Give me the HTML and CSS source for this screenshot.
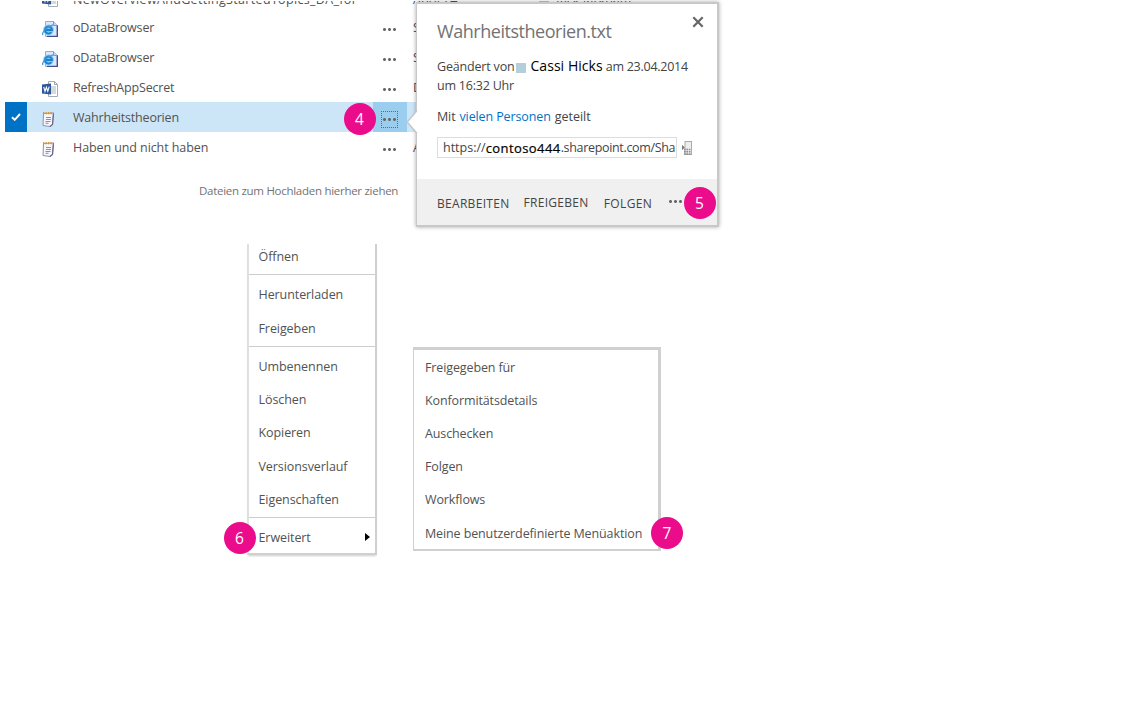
FILE: index.html
```html
<!DOCTYPE html>
<html lang="de">
<head>
<meta charset="utf-8">
<title>Dokumente</title>
<link rel="stylesheet" href="styles.css">
</head>
<body>
<svg class="sprite" aria-hidden="true">
  <symbol id="i-word" viewBox="0 0 16 16">
    <path d="M6.500 .5h6l3 3v12h-9z" fill="#fff" stroke="#a3abb5"/>
    <path d="M12.500 .5v3h3" fill="none" stroke="#97a0ab"/>
    <path d="M9 6h5M9 8h5M9 10h5M9 12h5" stroke="#a9b4c0"/>
    <path d="M0 3.500 9 2.500v11L0 12.500z" fill="#2b579a"/>
    <path d="M1.700 5.800 3 10.300 4.400 6.200 5.800 10.300 7.200 5.600" fill="none" stroke="#fff" stroke-width="1.100"/>
  </symbol>
  <symbol id="i-web" viewBox="0 0 16 16">
    <path d="M3.500 .5h8l4 4v11h-12z" fill="#dde7fa" stroke="#9aa9d0"/>
    <path d="M15.300 4v11.500H5" fill="none" stroke="#414f8c" stroke-width="1.400"/>
    <path d="M11.500 .5v4h4" fill="#c5d2f0" stroke="#8796c4"/>
    <circle cx="6.500" cy="8.800" r="5.300" fill="#7cc6f2"/>
    <path d="M3.200 9h6.800a3.500 3.500 0 1 0-.7 2.200" fill="none" stroke="#1f7fca" stroke-width="1.900"/>
    <path d="M1 14C-.8 11.500 5 5.500 11 3.800" fill="none" stroke="#3b9be0" stroke-width="1.300"/>
  </symbol>
  <symbol id="i-note" viewBox="0 0 16 16">
    <path d="M2.500 2.500 12.500 2 11.500 13.500 9 15.500 2 14.500z" fill="#f6f6fc" stroke="#8f90aa"/>
    <path d="M12.500 2 11.500 13.500 9 15.500" fill="none" stroke="#66678a" stroke-width="1.200"/>
    <path d="M2 2.200h10.500" stroke="#d9953c" stroke-width="2.200" stroke-dasharray="1.300 1.200"/>
    <path d="M5 6.500h5M5 8.500h5M4.500 10.500h5M4.500 12.300h3" stroke="#8a8db4"/>
  </symbol>
</svg>

<main class="canvas">
  <section class="files">
    <div class="row first">
      <span class="check"></span><svg class="icon"><use href="#i-word"/></svg>
      <span class="name long">NewOverviewAndGettingStartedTopics_DA_for</span><span class="more"></span>
      <span class="date">April 24</span><span class="person"><i class="presence"></i>Rick Kirkham</span>
    </div>
    <div class="row">
      <span class="check"></span><svg class="icon"><use href="#i-web"/></svg>
      <span class="name">oDataBrowser</span><span class="more"><i class="dots"></i></span><span class="date">S</span>
    </div>
    <div class="row">
      <span class="check"></span><svg class="icon"><use href="#i-web"/></svg>
      <span class="name">oDataBrowser</span><span class="more"><i class="dots"></i></span><span class="date">S</span>
    </div>
    <div class="row">
      <span class="check"></span><svg class="icon"><use href="#i-word"/></svg>
      <span class="name">RefreshAppSecret</span><span class="more"><i class="dots"></i></span><span class="date">D</span>
    </div>
    <div class="row selected">
      <span class="check"><svg class="tick" viewBox="0 0 10 8"><path d="M1 4.200 3.700 6.800 9 1" fill="none" stroke="#fff" stroke-width="1.900"/></svg></span>
      <svg class="icon note"><use href="#i-note"/></svg>
      <span class="name">Wahrheitstheorien</span><span class="more"><i class="focus"><i class="dots"></i></i></span><span class="date"></span>
    </div>
    <div class="row">
      <span class="check"></span><svg class="icon note"><use href="#i-note"/></svg>
      <span class="name haben">Haben und nicht haben</span><span class="more"><i class="dots"></i></span><span class="date">A</span>
    </div>
    <p class="drop">Dateien zum Hochladen hierher ziehen</p>
  </section>

  <aside class="card">
    <svg class="pointer" viewBox="0 0 12 26"><path d="M12 1 1.500 13 12 25z" fill="#fff"/><path d="M11 1.500 1.200 13 11 24.500" fill="none" stroke="#c4c9cd" stroke-width="1.600"/></svg>
    <div class="body">
      <header class="head">
        <h1>Wahrheitstheorien.txt</h1>
        <svg class="close" viewBox="0 0 12 12"><path d="M1.300 1.300 10.700 10.700M10.700 1.300 1.300 10.700" stroke="#666" stroke-width="2.200"/></svg>
      </header>
      <p class="changed"><span>Geändert von</span><i class="presence"></i><b>Cassi Hicks</b><span class="when">am 23.04.2014</span></p>
      <p class="time">um 16:32 Uhr</p>
      <p class="shared"><span>Mit</span><a>vielen Personen</a><span class="geteilt">geteilt</span></p>
      <div class="link">
        <div class="url"><span>https://</span><b>contoso444</b><span class="host">.sharepoint.com/Sha</span></div>
        <svg class="phone" viewBox="0 0 12 14"><path d="M1 4 4 6.500 1 9z" fill="#777"/><rect x="4" y=".5" width="6.500" height="13" fill="#eee" stroke="#aaa"/><path d="M3 8.500h7M3 10.700h7M3 12.900h7" stroke="#888" stroke-width="1.500" stroke-dasharray="1.600 .8"/></svg>
      </div>
    </div>
    <footer class="actions">
      <span>BEARBEITEN</span><span class="share">FREIGEBEN</span><span class="follow">FOLGEN</span><i class="dots"></i>
    </footer>
  </aside>

  <nav class="menu context">
    <ul class="group open"><li>Öffnen</li></ul>
    <ul class="group load"><li>Herunterladen</li><li>Freigeben</li></ul>
    <ul class="group edit"><li>Umbenennen</li><li>Löschen</li><li>Kopieren</li><li>Versionsverlauf</li><li>Eigenschaften</li></ul>
    <ul class="group extra"><li>Erweitert<i class="arrow"></i></li></ul>
  </nav>

  <nav class="menu sub">
    <ul class="group"><li>Freigegeben für</li><li>Konformitätsdetails</li><li>Auschecken</li><li>Folgen</li><li>Workflows</li><li>Meine benutzerdefinierte Menüaktion</li></ul>
  </nav>

  <span class="step s4">4</span>
  <span class="step s5">5</span>
  <span class="step s6">6</span>
  <span class="step s7">7</span>
</main>
</body>
</html>
```
FILE: styles.css
```css
* { box-sizing: border-box; margin: 0; padding: 0; }
body { background: #fff; color: #525252; font: 12.5px/20px "Open Sans", "Noto Sans", sans-serif; }
i { font-style: normal; }
ul { list-style: none; }
.sprite { position: absolute; width: 0; height: 0; }
.canvas { position: relative; width: 1123px; height: 728px; overflow: hidden; padding-top: 1px; }

/* file list */
.files { width: 720px; height: 211px; overflow: hidden; display: flex; flex-direction: column; justify-content: flex-end; }
.row { flex: none; height: 30px; margin-left: 5px; display: grid; grid-template-columns: 22px 46px 300px 34px 132px 1fr; align-items: center; white-space: nowrap; }
.check { align-self: stretch; display: grid; place-items: center; }
.tick { width: 10px; height: 8px; }
.icon { width: 16px; height: 16px; margin: 3px 0 0 15px; }
.icon.note { margin: 3px 0 0 14px; }
.name { padding-top: 1px; letter-spacing: -.19px; }
.name.long { letter-spacing: .33px; }
.name.haben { letter-spacing: -.09px; }
.first .name, .first .date, .first .person { padding-top: 5px; }
.more { align-self: stretch; display: grid; place-items: center; padding: 4px 1px 0 0; }
.dots { display: block; width: 13px; height: 3px; background: radial-gradient(circle at 1.5px 1.5px, #666 1.1px, transparent 1.8px) 0 0 / 5px 3px; }
.date { padding: 1px 0 0 6px; }
.person { display: flex; align-items: center; gap: 7px; }
.presence { width: 10px; height: 10px; background: #b4cfda; }
.selected { width: 411px; background: #cde6f7; grid-template-columns: 22px 46px 300px 34px 9px; }
.selected .check { background: #0072c6; }
.selected .more { background: #9bcdee; }
.focus { display: grid; place-items: center; width: 17px; height: 17px; border: 1px dotted #667; }
.drop { flex: none; height: 50px; padding: 19px 0 0 199px; font-size: 11.5px; letter-spacing: -.28px; color: #737373; }

/* document callout */
.card { position: absolute; left: 416px; top: 2px; width: 303px; height: 225px; display: flex; flex-direction: column; background: #fff; border: 1px solid #c8c8c8; border-width: 2px 2px 2px 1px; box-shadow: 0 0 4px rgba(0, 0, 0, .35); white-space: nowrap; color: #444; }
.pointer { position: absolute; left: -11px; top: 105px; width: 12px; height: 26px; }
.body { flex: 1; padding: 15px 10px 0 20px; }
.head { display: flex; justify-content: space-between; align-items: flex-start; height: 38px; }
.head h1 { font-size: 18px; font-weight: 400; line-height: 24px; letter-spacing: -.46px; color: #737373; }
.close { width: 12px; height: 12px; margin: -3px 3px 0 0; }
.changed { display: flex; align-items: center; height: 20px; letter-spacing: -.18px; }
.changed .presence { margin: 1px 4px 0 2px; }
.changed b { font-size: 14px; line-height: 18px; font-weight: 400; letter-spacing: .05px; color: #000; margin: -2px 3px 0 0; }
.changed .when { letter-spacing: -.26px; }
.time { margin-top: -1px; letter-spacing: -.22px; }
.shared { display: flex; margin-top: 11px; letter-spacing: -.12px; }
.shared a { color: #0072c6; margin-left: 4px; }
.shared .geteilt { letter-spacing: 0; margin-left: 4px; }
.link { display: flex; align-items: center; margin-top: 10px; gap: 4px; }
.url { width: 240px; height: 21px; padding: 1px 0 0 5px; border: 1px solid #ddd; display: flex; align-items: center; overflow: hidden; }
.url b { font-size: 13px; font-weight: 400; letter-spacing: .42px; color: #000; -webkit-text-stroke: .2px #000; }
.url .host { letter-spacing: -.33px; }
.phone { width: 12px; height: 14px; }
.actions { height: 46px; padding: 3px 0 0 20px; display: flex; align-items: center; background: #f0f0f0; font-size: 12px; letter-spacing: .3px; }
.actions .share { margin: -2px 0 0 14px; }
.actions .follow { margin-left: 15px; letter-spacing: .4px; }
.actions .dots { margin: -4px 0 0 17px; }

/* menus */
.menu { position: absolute; background: #fff; border: 1px solid #d0d0d0; }
.context { left: 247px; top: 244px; width: 130px; height: 311px; border-width: 0 2px 2px; border-left-color: #e0e0e0; box-shadow: 0 2px 2px -1px rgba(0, 0, 0, .2); letter-spacing: -.08px; }
.group { display: grid; grid-auto-rows: 33.300px; padding-left: 9.500px; }
.group li { display: flex; align-items: center; }
.context .group + .group { border-top: 1px solid #ccc; }
.context .open { height: 30px; grid-auto-rows: 26px; }
.context .load { height: 72px; padding-top: 3px; grid-auto-rows: 34px; }
.context .edit { height: 171px; padding-top: 3px; }
.context .extra { padding-top: 3px; }
.arrow { margin-left: auto; margin-right: 5px; margin-top: -2px; border: solid transparent; border-width: 4.500px 0 4.500px 5px; border-left-color: #000; }
.sub { left: 413px; top: 347px; width: 248px; height: 204px; border-width: 3px 3px 2px 1px; letter-spacing: -.12px; white-space: nowrap; }
.sub .group { padding: 1px 0 0 11px; grid-auto-rows: 33.200px; }

/* numbered callouts */
.step { position: absolute; width: 32px; height: 32px; border-radius: 50%; background: #eb0c8c; color: #fff; font-size: 15.500px; line-height: 32px; text-align: center; }
.s4 { left: 343.500px; top: 102.500px; }
.s5 { left: 683.500px; top: 186.500px; }
.s6 { left: 223.500px; top: 522px; }
.s7 { left: 651px; top: 517px; }
```
